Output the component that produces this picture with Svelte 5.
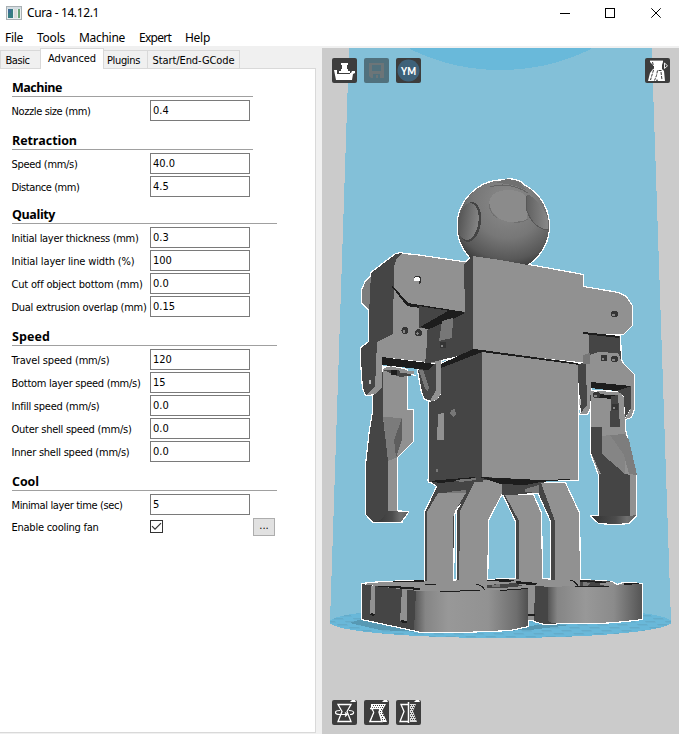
<script>
  const menus = [['File', 5, 18], ['Tools', 37, 28], ['Machine', 79, 46], ['Expert', 139, 32], ['Help', 185, 25]];
  const tabs = [['Basic', 40, 24], ['Advanced', 64, 48], ['Plugins', 43, 33], ['Start/End-GCode', 93, 82]];
  const sections = [
    { title: 'Machine', tw: 50, line: 241, head: 28, rows: [['Nozzle size (mm)', '0.4', 79]] },
    { title: 'Retraction', tw: 65, line: 241, head: 28, rows: [['Speed (mm/s)', '40.0', 66], ['Distance (mm)', '4.5', 68]] },
    { title: 'Quality', tw: 43, line: 265, head: 26, rows: [
      ['Initial layer thickness (mm)', '0.3', 127], ['Initial layer line width (%)', '100', 123],
      ['Cut off object bottom (mm)', '0.0', 131], ['Dual extrusion overlap (mm)', '0.15', 135]] },
    { title: 'Speed', tw: 38, line: 265, head: 28, rows: [
      ['Travel speed (mm/s)', '120', 98], ['Bottom layer speed (mm/s)', '15', 129], ['Infill speed (mm/s)', '0.0', 88],
      ['Outer shell speed (mm/s)', '0.0', 120], ['Inner shell speed (mm/s)', '0.0', 118]] },
    { title: 'Cool', tw: 27, line: 265, head: 28, rows: [['Minimal layer time (sec)', '5', 111]] }
  ];

  // Spreads the letters of a caption over the given number of pixels.
  function fit(node, width) {
    const natural = node.getBoundingClientRect().width;
    node.style.letterSpacing = (width - natural) / node.textContent.length + 'px';
  }

  const L = '#919191', D = '#454545', K = '#1d1d1d', M = '#777777';

  // Solid parts of the model, back to front; they also make up its silhouette.
  const solids = [
    ['362,290 366,281 371,276 371,312 362,303', '#7d7d7d'],
    // legs
    ['428,480 502,474 545,478 541,492 505,496 490,489 443,490', D],
    ['503,494 506,488 519,520 519,585 516,585 516,521', D],
    ['505,495 533,495 541,513 542,584 519,584 519,521', L],
    ['538,492 541,483 555,521 556,588 551,588 551,521', D],
    ['541,483 565,483 579,513 580,588 555,588 555,521', L],
    ['425,512 438,485 470,484 470,494 454,510 453,588 425,588', D],
    ['427,512 438,493 466,493 455,511 453,518 453,588 427,588', L],
    ['457,511 476,478 482,478 460,511 459,592 457,592', D],
    ['460,511 476,479 502,481 502,493 488,520 487,592 459,592', L],
    // feet
    ['362,584 383,582 424,581 487,580 500,580 500,590 418,592', L],
    ['487,580 516,579 580,580 612,582 617,585 624,583 642,584 642,590 487,592', L],
    ['527,586 536,586 536,620 527,620', L],
    ['535,586 552,587 556,624 545,624 534,621', D],
    ['362,584 375,586 418,591 422,632 362,619', D],
    ['548,587 575,586 642,584 642,619 625,621 600,623 552,623 548,621', 'url(#footR)'],
    ['416,591 460,591 528,589 528,626 510,630 460,632 420,632 414,630', 'url(#footL)'],
    // lower left arm
    ['373,395 380,390 383,368 385,420 390,460 389,514 402,522 373,522 366,514 366,465 370,430 373,412', D],
    ['383,369 390,366 407,370 407,410 413,410 413,441 397,457 397,513 388,512 388,460 383,418', L],
    ['388,511 408,512 401,522 373,522 381,520', 'url(#hand)'],
    // lower right arm
    ['591,391 620,392 624,398 625,430 627,438 635,472 636,475 636,516 630,520 599,515 599,475 591,453', L],
    ['591,427 602,427 602,453 625,474 601,474 591,453', D],
    ['599,474 625,474 630,475 630,516 599,518', D],
    ['591,516 630,516 636,515 629,523 615,524 599,523', 'url(#hand)'],
    // left shoulder and elbow
    ['371,273 396,254 402,253 400,336 377,350 369,349 369,315', D],
    ['361,348 369,342 382,341 377,387 374,394 366,395 363,388 361,360', D],
    ['394,266 397,258 401,254 415,255 462,262 470,262 466,312 430,311 430,338 441,350 440,395 437,400 430,401 435,391 435,363 382,357 382,387 376,394 366,395 375,387 377,342 393,334', L],
    ['418,370 425,365 436,364 436,390 431,401 425,399 422,392', D],
    // body
    ['464,264 474,255 474,352 425,364 430,310 465,312', D],
    ['441,364 474,349 483,350 483,482 429,482 429,402 437,400 441,394', D],
    ['577,364 592,362 591,400 586,414 581,414', D],
    ['589,334 620,336 621,366 586,365', D],
    ['473,256 500,260 534,266 583,275 583,287 618,293 626,297 632,306 632,325 623,334 589,334 589,363 473,351', L],
    ['482,350 578,363 578,480 540,480 482,477', L],
    // right elbow
    ['586,364 590,355 598,352 618,353 623,364 634,375 634,409 631,417 625,419 631,408 631,386 591,382 590,408 587,414 580,414 587,405', L],
    ['616,390 631,386 631,408 625,418 624,396', D]
  ];

  // Faces, slots and creases painted over the solids.
  const details = [
    ['371,273 394,256 396,259 394,266 392,285 372,280', D],
    ['392,285 408,303 465,312 462,314 407,306 392,287', K],
    ['419,306 450,311 421,328 419,328', D],
    ['448,311 465,313 430,330 420,327', K],
    ['427,330 452,319 452,345 441,351 427,338', D],
    ['442,321 453,318 452,338 439,341', M],
    ['382,357 435,364 428,370 382,365', K],
    ['419,370 423,370 429,387 428,392 425,389', M],
    ['383,370 414,371 414,375 400,377 383,370', D],
    ['400,370 414,371 414,374 400,373', L],
    ['391,370 397,370 397,375 391,375', K],
    ['383,417 402,418 394,440 398,457 388,461', '#7b7b7b'],
    ['402,418 402,440 396,457 394,440', '#5e5e5e'],
    ['441,364 473,349 482,350 482,352 441,368', K],
    ['441,366 441,393 437,400 430,401 436,390 436,366', L],
    ['482,350 577,363 580,365 482,352', K],
    ['438,414 444,413 444,440 437,440', L],
    ['451,410 455,409 456,414 453,417 450,414', M],
    ['436,469 438,469 438,472 436,472', M],
    ['583,332 619,336 619,338 583,334', K],
    ['591,382 631,386 616,391 591,388', K],
    ['593,394 615,395 611,399 593,397', K],
    ['611,396 618,395 620,427 610,427', D],
    ['610,435 625,455 625,474 602,454 602,436', '#858585'],
    ['610,435 624,455 629,474 637,475 629,440 625,434', '#7d7d7d'],
    ['429,481 475,477 476,479 440,483', K],
    ['479,477 540,480 576,479 540,482 525,485 500,484', K],
    ['447,492 466,490 466,493 447,493', M],
    ['455,480 476,478 476,480 460,482', M],
    ['525,489 539,485 539,493 525,492', M],
    ['373,586 395,586 420,588 420,590 405,589', K],
    ['383,582 424,580 424,582', K],
    ['425,584 436,584 436,585 425,585', K],
    ['487,580 502,579 515,580 510,582 487,581', K],
    ['487,585 516,583 523,586 503,588 487,588', D],
    ['492,585 500,584 500,587 492,587', M],
    ['516,581 537,583 535,585 517,584', K],
    ['440,591 480,590 480,591 440,592', K],
    ['500,590 528,588 528,589 500,591', K],
    ['580,580 609,581 612,583 602,586 580,586', D],
    ['580,580 600,581 609,583 580,582', K],
    ['583,582 590,583 588,586 583,586', M],
    ['600,583 612,582 610,585 600,585', L],
    ['575,586 609,586 609,587 575,587', K],
    ['624,583 639,583 639,584 624,585', K],
    ['371,586 375,586 375,615 370,614', L],
    ['402,589 407,590 407,622 400,621', L],
    ['371,613 375,614 374,616 370,615', K],
    ['401,620 407,621 407,623 402,623', K],
    ['528,614 535,614 535,616 528,616', K],
    ['583,355 590,353 590,364 583,364', M]
  ];
  const screws = [[405, 330.5], [418.5, 332.5], [443, 345], [614.5, 314], [604, 358], [614.5, 359], [596.5, 395], [615, 407]];
</script>

<div class="window">
  <header class="titlebar">
    <svg class="appicon" width="16" height="14" viewBox="0 0 16 14">
      <rect x=".5" y=".5" width="15" height="13" fill="#e9eef0" stroke="#a9b0b4" />
      <rect x="1" y="1" width="14" height="2" fill="#d4dde2" />
      <rect x="2" y="3" width="5" height="9" fill="#377d83" /><rect x="2" y="3" width="3" height="4" fill="#3c6d96" />
      <rect x="8" y="3" width="3" height="9" fill="#dadada" />
      <rect x="12" y="3" width="2" height="9" fill="#68a278" />
    </svg>
    <span class="caption"><span use:fit={72}>Cura - 14.12.1</span></span>
    <svg class="controls" width="104" height="12" viewBox="0 0 104 12" fill="none" stroke="#000" stroke-width="1">
      <path d="M0 6.5h10M45.500 1.500h9v9h-9z" shape-rendering="crispEdges" />
      <path d="M91.300 1.300l9.400 9.400M100.700 1.300l-9.400 9.400" />
    </svg>
  </header>

  <nav class="menu">
    {#each menus as [name, left, w], i}
      <span style:margin-left="{i ? left - menus[i - 1][1] - menus[i - 1][2] : left}px" style:width="{w}px"><span use:fit={w}>{name}</span></span>
    {/each}
  </nav>

  <main>
    <aside>
      <div class="tabs">
        {#each tabs as [name, w, tw], i}
          <div class="tab" class:active={i === 1} class:last={i === 3} style:width="{w}px"><span use:fit={tw}>{name}</span></div>
        {/each}
      </div>
      <div class="page">
        {#each sections as s}
          <section>
            <h2 style:height="{s.head}px" style:width="{s.line}px"><span use:fit={s.tw}>{s.title}</span></h2>
            {#each s.rows as [label, value, w]}
              <div class="row"><div class="label"><span use:fit={w}>{label}</span></div><div class="field">{value}</div></div>
            {/each}
          </section>
        {/each}
        <div class="row fan">
          <div class="label"><span use:fit={87}>Enable cooling fan</span></div>
          <div class="check"><svg width="11" height="11" viewBox="0 0 11 11"><path d="M1 5.200l3 3 6-6" fill="none" stroke="#333" stroke-width="1.200" /></svg></div>
          <div class="more">...</div>
        </div>
      </div>
    </aside>

    <div class="viewport">
      <svg class="scene" width="357" height="686" viewBox="322 48 357 686" shape-rendering="crispEdges">
        <defs>
          <radialGradient id="ball" cx=".55" cy=".25" r=".77">
            <stop offset="0" stop-color="#8c8c8c" /><stop offset=".5" stop-color="#777" /><stop offset=".8" stop-color="#585858" /><stop offset="1" stop-color="#303030" />
          </radialGradient>
          <linearGradient id="bump"><stop offset="0" stop-color="#555" /><stop offset="1" stop-color="#858585" /></linearGradient>
          <linearGradient id="bumpR"><stop offset="0" stop-color="#606060" /><stop offset="1" stop-color="#888" /></linearGradient>
          <linearGradient id="footL"><stop offset="0" stop-color="#555" /><stop offset=".1" stop-color="#858585" /><stop offset=".3" stop-color="#989898" /><stop offset=".65" stop-color="#929292" /><stop offset=".9" stop-color="#6e6e6e" /><stop offset="1" stop-color="#505050" /></linearGradient>
          <linearGradient id="footR"><stop offset="0" stop-color="#555" /><stop offset=".1" stop-color="#858585" /><stop offset=".4" stop-color="#989898" /><stop offset=".7" stop-color="#8b8b8b" /><stop offset="1" stop-color="#555" /></linearGradient>
          <linearGradient id="hand"><stop offset="0" stop-color="#333" /><stop offset=".55" stop-color="#4c4c4c" /><stop offset=".8" stop-color="#707070" /><stop offset="1" stop-color="#606060" /></linearGradient>
          <pattern id="bed" width="20" height="6" patternUnits="userSpaceOnUse" patternTransform="skewX(35)">
            <rect width="20" height="6" fill="#69b8d9" /><path d="M0 1h10M10 4h10" stroke="#64acca" stroke-width="1.500" />
          </pattern>
          <clipPath id="plate"><ellipse cx="500.500" cy="622" rx="171" ry="16" /></clipPath>
        </defs>
        <rect x="322" y="48" width="357" height="686" fill="#cbcbcb" />
        <path d="M349 48H651.700L671 622H330Z" fill="#83c0d8" />
        <ellipse cx="500.500" cy="-38" rx="152" ry="108" fill="#69b9da" />
        <ellipse cx="500.500" cy="622" rx="171" ry="16" fill="url(#bed)" />
        <path clip-path="url(#plate)" d="M350 623L361 619L420 633L529 626L550 624L570 625L530 630L440 633L380 630Z" fill="#5799b4" />

        <g fill="#fff" stroke="#fff" stroke-width="2.400" stroke-linejoin="round">
          <circle cx="503.300" cy="226" r="45.600" /><ellipse cx="510" cy="189" rx="15" ry="9.500" />
          {#each solids as [points]}<polygon {points} />{/each}
        </g>
        <ellipse cx="510" cy="189" rx="15" ry="9.500" fill="#777" />
        <circle cx="503.300" cy="226" r="45.600" fill="url(#ball)" />
        <path d="M496 183Q510 175 521 184L526 190Q510 183 496 183Z" fill="#707070" />
        <path d="M490 187Q509 181 528 193" fill="none" stroke="#646464" />
        <ellipse cx="470" cy="222" rx="11" ry="20" fill="#444" transform="rotate(8 470 222)" />
        <ellipse cx="468.500" cy="221.500" rx="10" ry="18.500" fill="url(#bump)" transform="rotate(8 468 221)" />
        <path d="M489 204Q490 191 507 190Q522 190 527 197V219Q520 224 509 222Q493 219 489 204Z" fill="#8b8b8b" />
        <path d="M489 204Q490 213 497 218M514 222Q522 223 528 219" fill="none" stroke="#707070" />
        <path d="M526 198Q527 192 532 197Q545 206 548 220V229H543Q529 222 526 207Z" fill="url(#bumpR)" />
        <path d="M526 196V207Q530 224 543 229H549" fill="none" stroke="#585858" />

        {#each solids as [points, fill]}<polygon {points} {fill} />{/each}
        {#each details as [points, fill]}<polygon {points} {fill} />{/each}
        <path d="M476 584Q482 585 485 590M570 580Q575 581 578 586" fill="none" stroke="#1d1d1d" />
        {#each screws as [x, y]}
          <circle cx={x} cy={y} r="3.500" fill="#353535" /><circle cx={x - 1} cy={y + 1} r="1.300" fill="#858585" />
        {/each}
        <circle cx="417.500" cy="280" r="4" fill="#303030" /><ellipse cx="417" cy="279.500" rx="2.800" ry="2.500" fill="#fff" /><path d="M414 281h5v4h-5z" fill="#919191" />
        <path d="M368.500 380v4h2v-4zM579 399v6h2v-6z" fill="#bbb" />
        <path d="M383 366.500h7M411 374l5 2M592 390.500l5 1M606 391h6" stroke="#fff" />
      </svg>

      <div class="overlay">
        <div class="bar top">
          <svg class="tool" viewBox="0 0 25 25">
            <path d="M9 5h7v2h-1v4h1v2h2v2H7v-2h2v-2h1V7H9z" fill="#fff" />
            <path d="M2 12h3v3h14l1-2h3v2l-2 1-1 6H4z" fill="#fff" /><path d="M5 15.500h13" stroke="#3d3d3d" />
          </svg>
          <svg class="tool dim" viewBox="0 0 25 25">
            <path d="M5 5h15v15H7l-2-2z" fill="#6c7578" /><path d="M8 7h9v6H8zM9 16h7v4h-2v-3h-2v3H9z" fill="#51717d" />
          </svg>
          <svg class="tool" viewBox="0 0 25 25">
            <circle cx="12.500" cy="12.500" r="11" fill="#3e6179" />
            <text x="12.500" y="17" text-anchor="middle" textLength="15" lengthAdjust="spacingAndGlyphs" font-family="Lato, sans-serif" font-size="11" font-weight="900" fill="#fff">YM</text>
          </svg>
          <svg class="tool right" viewBox="0 0 25 25">
            <path d="M5 2h13v2l-1 3v4l2 2 1 10h-7l-1-2-1 2H3l2-8 3-4V7L5 4z" fill="#fff" />
            <path d="M5 2.500h13" stroke="#888" />
            <path d="M7.500 4l1 4v4l-3 10M16.500 12.500h-4l-1 5-2 5M16 14l1 8" fill="none" stroke="#3d3d3d" stroke-dasharray="3 1" />
            <path d="M19.500 5v5.500l3-2.700z" fill="none" stroke="#eee" />
          </svg>
        </div>
        <div class="bar bottom">
          <svg class="tool" viewBox="0 0 25 25">
            <path d="M18 2h6l-1-2h-3z" fill="#fff" />
            <path d="M6 4.500h13l-4 7 4 10H6l4-10z" fill="none" stroke="#fff" stroke-width="1.300" />
            <path d="M8 10.500c-6 0-6 4 0 4h7l-2-2m2 2l-2 2M17 10.500c6 0 6 4 1 4" fill="none" stroke="#fff" stroke-width="1.200" />
          </svg>
          <svg class="tool" viewBox="0 0 25 25">
            <path d="M18 2h6l-1-2h-3z" fill="#fff" />
            <path d="M7 4h15l-4 7 5 11h-4l-4-10 1-3H7z" fill="#fff" />
            <path d="M9 5.500h11M8 7.500h11M15 9.500h3M16 11.500h2M16 13.500h3M17 15.500h3M18 17.500h2M18 19.500h3" stroke="#3d3d3d" stroke-dasharray="1 1" />
            <path d="M6 8.500h11M8 9l2 3-4 9.500h12l-3-9.500 1-3" fill="none" stroke="#fff" stroke-width="1.500" />
            <path d="M9 9.500h6l-1.500 3 3 8H7.500l3-8z" fill="#3d3d3d" />
          </svg>
          <svg class="tool" viewBox="0 0 25 25">
            <path d="M18 2h6l-1-2h-3z" fill="#fff" />
            <path d="M14 4h6l-3 7 4 11h-7z" fill="#ddd" /><path d="M14 5.500h5M15 7.500h4M14 9.500h4M15 11.500h3M14 13.500h4M15 15.500h4M14 17.500h5M15 19.500h5" stroke="#3d3d3d" stroke-dasharray="1 1" />
            <path d="M12 4.500H5l3 7-4 10h8" fill="none" stroke="#fff" stroke-width="1.300" /><path d="M12.500 2v21" stroke="#fff" stroke-width="1.500" />
          </svg>
        </div>
      </div>
    </div>
  </main>
</div>

<style>
  .window { width: 679px; height: 734px; display: flex; flex-direction: column; overflow: hidden; background: #fff; color: #000; font-family: "Noto Sans", "Open Sans", sans-serif; font-size: 12px; }
  .titlebar { height: 25px; display: flex; align-items: center; padding-left: 6px; box-sizing: border-box; }
  .appicon { flex: none; }
  .caption { margin-left: 5px; white-space: nowrap; line-height: 25px; }
  .controls { margin-left: auto; margin-right: 15px; }
  .menu { height: 21px; display: flex; line-height: 26px; white-space: nowrap; }
  .menu > span { flex: none; }
  main { flex: 1; display: flex; min-height: 0; font-family: "DejaVu Sans Condensed", "DejaVu Sans", sans-serif; font-size: 11px; font-stretch: condensed; }
  aside { width: 322px; background: #f0f0f0; box-sizing: border-box; padding: 2px 6px 1px 0; display: flex; flex-direction: column; }
  .tabs { height: 20px; display: flex; align-items: flex-end; }
  .tab { height: 18px; box-sizing: border-box; border-top: 1px solid #d9d9d9; border-left: 1px solid #d9d9d9; text-align: center; line-height: 19px; white-space: nowrap; }
  .tab:first-child { padding-right: 6px; }
  .tab.last { border-right: 1px solid #d9d9d9; }
  .tab.active { height: 21px; margin-bottom: -1px; line-height: 20px; background: #fff; border-right: 1px solid #d9d9d9; z-index: 1; }
  .tab.active + .tab { border-left: none; padding-right: 4px; }
  .page { flex: 1; background: #fff; border: 1px solid #d9d9d9; border-left: none; padding-left: 12px; }
  h2 { margin: 0 0 3px; box-sizing: border-box; border-bottom: 1px solid #a0a0a0; font-family: "Open Sans", "Noto Sans", sans-serif; font-stretch: normal; font-size: 12.500px; line-height: 17px; font-weight: bold; display: flex; align-items: flex-end; white-space: nowrap; }
  section:nth-child(n + 2) h2 { margin-top: 1px; }
  section { display: flow-root; }
  .row { display: flex; height: 21px; margin-bottom: 2px; }
  section .row:last-child { margin-bottom: 0; }
  .label { width: 138px; line-height: 23px; white-space: nowrap; }
  .label span { margin-left: -0.500px; }
  .field { width: 100px; height: 21px; box-sizing: border-box; border: 1px solid #7a7a7a; padding-left: 2px; line-height: 19px; }
  .fan { margin-top: 3px; align-items: flex-start; }
  .fan .label { line-height: 19px; }
  .check { width: 13px; height: 13px; box-sizing: border-box; border: 1px solid #333; margin-top: 2px; }
  .check svg { display: block; }
  .more { margin-left: 90px; width: 22px; height: 18px; box-sizing: border-box; border: 1px solid #adadad; background: #e1e1e1; text-align: center; line-height: 13px; }
  .viewport { flex: 1; position: relative; border-top: 2px solid #f0f0f0; }
  .scene { position: absolute; left: 0; top: 0; }
  .overlay { position: relative; height: 100%; box-sizing: border-box; padding: 10px 9px 9px 10px; display: flex; flex-direction: column; justify-content: space-between; }
  .bar { display: flex; gap: 7px; }
  .tool { width: 25px; height: 25px; background: #3d3d3d; border-radius: 2px; }
  .tool.dim { background: #51717d; }
  .tool.right { margin-left: auto; }
</style>
